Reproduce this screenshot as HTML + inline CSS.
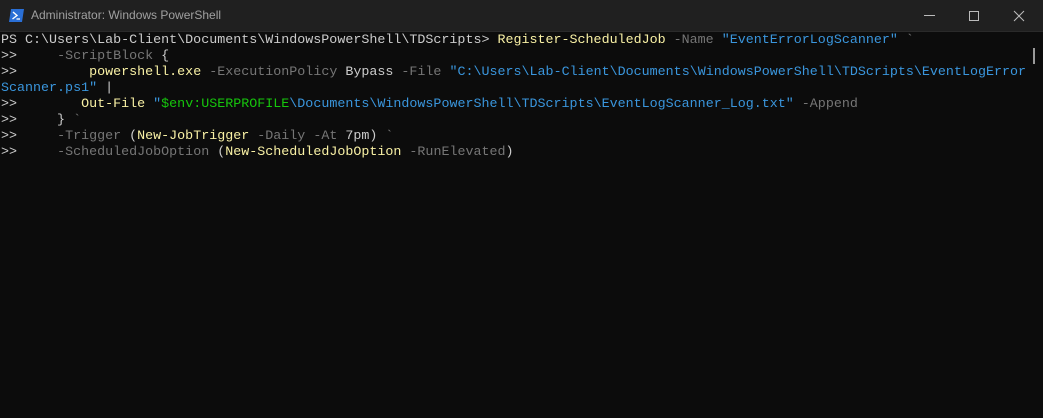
<!DOCTYPE html><html><head><style>
body{margin:0;width:1043px;height:418px;background:#0c0c0c;overflow:hidden;position:relative;font-family:"Liberation Sans",sans-serif}
.tb{position:absolute;left:0;top:0;width:1043px;height:31px;background:#202020;border-bottom:1px solid #2a2a2a}
.tt{position:absolute;left:31px;top:8px;font-size:12px;color:#a0a0a0}
.term{position:absolute;left:1px;top:33px;font-family:"Liberation Mono",monospace;font-size:13.35px;line-height:16px;color:#cccccc;white-space:pre}
.y{color:#f9f1a5}.g{color:#767676}.b{color:#3a96dd}.v{color:#16c60c}
</style></head><body>
<div class="tb">
<svg style="position:absolute;left:9px;top:9px" width="15" height="13" viewBox="0 0 15 13"><path d="M2 0H15L13 13H0Z" fill="#2a6fd6"/><path d="M4 3L8 6.5L3.5 10" stroke="#fff" stroke-width="1.4" fill="none"/><path d="M7.5 10H11" stroke="#fff" stroke-width="1.3"/></svg>
<div class="tt">Administrator: Windows PowerShell</div>
<svg style="position:absolute;left:920px;top:10px" width="110" height="12"><path d="M4 5.5H15" stroke="#bbb"/><path d="M49.5 1.5h9v9h-9z" stroke="#bbb" fill="none"/><path d="M94 1L104 11M104 1L94 11" stroke="#bbb"/></svg>
</div>
<div style="position:absolute;left:1033px;top:48px;width:2px;height:16px;background:#9a9a9a"></div>
<div class="term">PS C:\Users\Lab-Client\Documents\WindowsPowerShell\TDScripts&gt; <span class="y">Register-ScheduledJob</span> <span class="g">-Name</span> <span class="b">"EventErrorLogScanner"</span> <span class="g">`</span>
&gt;&gt;     <span class="g">-ScriptBlock</span> {
&gt;&gt;         <span class="y">powershell.exe</span> <span class="g">-ExecutionPolicy</span> Bypass <span class="g">-File</span> <span class="b">"C:\Users\Lab-Client\Documents\WindowsPowerShell\TDScripts\EventLogError</span>
<span class="b">Scanner.ps1"</span> |
&gt;&gt;        <span class="y">Out-File</span> <span class="b">"</span><span class="v">$env:USERPROFILE</span><span class="b">\Documents\WindowsPowerShell\TDScripts\EventLogScanner_Log.txt"</span> <span class="g">-Append</span>
&gt;&gt;     } <span class="g">`</span>
&gt;&gt;     <span class="g">-Trigger</span> (<span class="y">New-JobTrigger</span> <span class="g">-Daily</span> <span class="g">-At</span> 7pm) <span class="g">`</span>
&gt;&gt;     <span class="g">-ScheduledJobOption</span> (<span class="y">New-ScheduledJobOption</span> <span class="g">-RunElevated</span>)</div>
</body></html>
